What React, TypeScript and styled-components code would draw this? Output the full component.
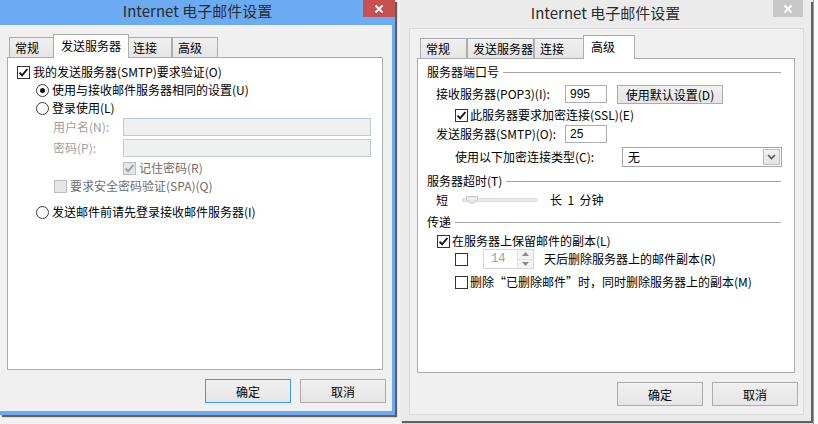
import * as React from 'react';
import styled, { createGlobalStyle } from 'styled-components';

const Global = createGlobalStyle`
  html, body { margin: 0; padding: 0; background: #f2f2f2; }
  body {
    font-family: "Noto Sans CJK SC", "Liberation Sans", sans-serif;
    font-size: 12px;
    color: #000;
  }
`;

const FONT = `"Noto Sans CJK SC", "Liberation Sans", sans-serif`;

const Desktop = styled.div`
  width: 818px;
  height: 424px;
  overflow: hidden;
  display: flex;
  align-items: flex-start;
  background: #f2f2f2;
`;

const Window = styled.div<{ $active?: boolean; $w: number; $ml?: number }>`
  flex: none;
  width: ${p => p.$w}px;
  margin-left: ${p => p.$ml ?? 0}px;
  display: flex;
  flex-direction: column;
  background: ${p => (p.$active ? '#6aabf4' : '#ebebeb')};
  box-shadow: 2px 2px 1px rgba(0, 0, 0, 0.6);
`;

const TitleBar = styled.div<{ $h: number }>`
  height: ${p => p.$h}px;
  display: grid;
  grid-template-columns: 1fr auto 1fr;
`;

const TitleText = styled.div<{ $lh: number }>`
  grid-column: 2;
  line-height: ${p => p.$lh}px;
  font-size: 15px;
  color: #2b2b2b;
  white-space: nowrap;
`;

const Close = styled.div<{ $active?: boolean; $w: number; $mr: number }>`
  grid-column: 3;
  justify-self: end;
  width: ${p => p.$w}px;
  height: 17px;
  margin-right: ${p => p.$mr}px;
  background: ${p => (p.$active ? '#c75050' : '#c7c7c7')};
  display: flex;
  align-items: center;
  justify-content: center;
`;

const Client = styled.div<{ $margin: string; $h: number; $border?: boolean }>`
  margin: ${p => p.$margin};
  height: ${p => p.$h}px;
  box-sizing: border-box;
  background: #f0f0f0;
  border: ${p => (p.$border ? '1px solid #d9d9d9' : 'none')};
  padding: ${p => (p.$border ? '6px 8px 0 7px' : '9px 9px 0 7px')};
  display: flex;
  flex-direction: column;
`;

const TabStrip = styled.div<{ $inset: number }>`
  height: 24px;
  display: flex;
  align-items: flex-end;
  padding-left: ${p => p.$inset}px;
  margin-bottom: -1px;
  position: relative;
  z-index: 1;
`;

const Tab = styled.div<{ $w: number; $on?: boolean }>`
  flex: none;
  box-sizing: border-box;
  width: ${p => p.$w + (p.$on ? 4 : 0)}px;
  height: ${p => (p.$on ? 24 : 20)}px;
  margin: ${p => (p.$on ? '0 -2px 0 -2px' : '0 0 1px 0')};
  border: 1px solid #acacac;
  border-bottom: none;
  background: ${p => (p.$on ? '#fff' : 'linear-gradient(#f0f0f0, #e5e5e5)')};
  padding: ${p => (p.$on ? '2px 0 0 7px' : '1px 0 0 5px')};
  line-height: 17px;
  white-space: nowrap;
  overflow: hidden;
  position: relative;
  z-index: ${p => (p.$on ? 2 : 0)};
`;

const Panel = styled.div<{ $h: number; $pad: string }>`
  height: ${p => p.$h}px;
  box-sizing: border-box;
  background: #fff;
  border: 1px solid #acacac;
  padding: ${p => p.$pad};
  display: flex;
  flex-direction: column;
`;

const Row = styled.div<{ $mt?: number; $indent?: number; $h?: number }>`
  flex: none;
  display: flex;
  align-items: center;
  height: ${p => p.$h ?? 18}px;
  margin-top: ${p => p.$mt ?? 0}px;
  padding-left: ${p => p.$indent ?? 0}px;
`;

const Label = styled.span<{ $tone?: 'light' | 'mid'; $w?: number; $ml?: number }>`
  flex: none;
  white-space: pre;
  width: ${p => (p.$w ? `${p.$w}px` : 'auto')};
  margin-left: ${p => p.$ml ?? 0}px;
  color: ${p => (p.$tone === 'light' ? '#a0a0a0' : p.$tone === 'mid' ? '#6d6d6d' : '#000')};
  line-height: 18px;
`;

const GroupLine = styled.div`
  flex: 1;
  margin-left: 4px;
  border-top: 1px solid #a6a6a6;
  height: 0;
`;

const Box = styled.div<{ $disabled?: boolean }>`
  flex: none;
  width: 13px;
  height: 13px;
  box-sizing: border-box;
  border: 1px solid ${p => (p.$disabled ? '#bcbcbc' : '#333')};
  background: ${p => (p.$disabled ? '#e6e6e6' : '#fff')};
  display: flex;
  align-items: center;
  justify-content: center;
`;

const Circle = styled.div`
  flex: none;
  width: 13px;
  height: 13px;
  box-sizing: border-box;
  border: 1px solid #3a3a3a;
  border-radius: 50%;
  background: #fff;
  display: flex;
  align-items: center;
  justify-content: center;
`;

const Dot = styled.div`
  width: 5px;
  height: 5px;
  border-radius: 50%;
  background: #111;
`;

const Field = styled.div<{ $w: number; $h?: number; $disabled?: boolean }>`
  flex: none;
  width: ${p => p.$w}px;
  height: ${p => p.$h ?? 18}px;
  box-sizing: border-box;
  border: 1px solid ${p => (p.$disabled ? '#bccadb' : '#abadb3')};
  background: ${p => (p.$disabled ? '#f0f0f0' : '#fff')};
  padding-left: 4px;
  line-height: 16px;
  font-family: "Liberation Sans", sans-serif;
  font-size: 12px;
`;

const Button = styled.div<{ $w: number; $h: number; $focused?: boolean; $ml?: number }>`
  flex: none;
  width: ${p => p.$w}px;
  height: ${p => p.$h}px;
  margin-left: ${p => p.$ml ?? 0}px;
  box-sizing: border-box;
  border: 1px solid ${p => (p.$focused ? '#3c9af5' : '#acacac')};
  background: linear-gradient(#f0f0f0, #e5e5e5);
  display: flex;
  align-items: center;
  justify-content: center;
  font-family: ${FONT};
  font-size: 12px;
  white-space: nowrap;
`;

const ButtonRow = styled.div<{ $mt: number }>`
  display: flex;
  justify-content: flex-end;
  gap: 9px;
  margin-top: ${p => p.$mt}px;
  margin-right: -3px;
`;

const Select = styled.div`
  flex: none;
  width: 160px;
  height: 20px;
  box-sizing: border-box;
  border: 1px solid #a5a5a5;
  background: #fff;
  display: flex;
  align-items: center;
  padding: 1px;
`;

const SelectValue = styled.span`
  flex: 1;
  padding-left: 4px;
  line-height: 16px;
`;

const SelectArrow = styled.div`
  width: 17px;
  height: 16px;
  box-sizing: border-box;
  border: 1px solid #bcbcbc;
  background: linear-gradient(#f3f3f3, #e3e3e3);
  display: flex;
  align-items: center;
  justify-content: center;
`;

const Slider = styled.div`
  flex: none;
  position: relative;
  width: 75px;
  height: 18px;
  margin-left: 14px;
  display: flex;
  align-items: center;
`;

const Track = styled.div`
  width: 100%;
  height: 4px;
  box-sizing: border-box;
  border: 1px solid #dcdcdc;
  background: #e9e9e9;
`;

const Thumb = styled.svg`
  position: absolute;
  left: 4px;
  top: 5px;
`;

const Spin = styled.div`
  flex: none;
  width: 51px;
  height: 20px;
  margin-left: 15px;
  box-sizing: border-box;
  border: 1px solid #d6d6d6;
  background: #fff;
  display: flex;
`;

const SpinText = styled.span`
  flex: 1;
  padding-left: 7px;
  line-height: 18px;
  color: #a0a0a0;
  font-family: "Liberation Mono", monospace;
  font-size: 12px;
`;

const SpinButtons = styled.div`
  width: 15px;
  display: flex;
  flex-direction: column;
  border-left: 1px solid #e2e2e2;
`;

const SpinHalf = styled.div<{ $top?: boolean }>`
  flex: 1;
  display: flex;
  align-items: center;
  justify-content: center;
  background: #f4f4f4;
  border-top: ${p => (p.$top ? 'none' : '1px solid #e2e2e2')};
`;

const Edge = styled.div`
  flex: 1;
  align-self: stretch;
  margin-left: 2px;
  background: #fbfbfb;
  border-left: 1px solid #9a9a9a;
`;

function Check({ checked, disabled }: { checked?: boolean; disabled?: boolean }) {
  return (
    <Box $disabled={disabled}>
      {checked && (
        <svg width="11" height="11" viewBox="0 0 11 11">
          <path
            d="M1.6 5.6 L4.1 8.4 L9.4 2"
            fill="none"
            stroke={disabled ? '#9c9c9c' : '#111'}
            strokeWidth="1.9"
          />
        </svg>
      )}
    </Box>
  );
}

function Radio({ on }: { on?: boolean }) {
  return <Circle>{on && <Dot />}</Circle>;
}

function XIcon() {
  return (
    <svg width="10" height="10" viewBox="0 0 10 10">
      <path d="M1.5 1.5 L8.5 8.5 M8.5 1.5 L1.5 8.5" stroke="#fff" strokeWidth="2" />
    </svg>
  );
}

function Tabs({ widths, active, inset }: { widths: number[]; active: number; inset: number }) {
  const names = ['常规', '发送服务器', '连接', '高级'];
  return (
    <TabStrip $inset={inset}>
      {names.map((n, i) => (
        <Tab key={n} $w={widths[i]} $on={i === active}>
          {n}
        </Tab>
      ))}
    </TabStrip>
  );
}

function OutgoingDialog() {
  return (
    <Window $active $w={395}>
      <TitleBar $h={25}>
        <TitleText $lh={22}>Internet 电子邮件设置</TitleText>
        <Close $active $w={32} $mr={0}>
          <XIcon />
        </Close>
      </TitleBar>
      <Client $margin="0 3px 4px 0" $h={386}>
        <Tabs widths={[46, 72, 45, 46]} active={1} inset={2} />
        <Panel $h={313} $pad="5px 0 0 9px">
          <Row>
            <Check checked />
            <Label $ml={3}>我的发送服务器(SMTP)要求验证(O)</Label>
          </Row>
          <Row $indent={19}>
            <Radio on />
            <Label $ml={3}>使用与接收邮件服务器相同的设置(U)</Label>
          </Row>
          <Row $indent={19}>
            <Radio />
            <Label $ml={3}>登录使用(L)</Label>
          </Row>
          <Row $indent={36} $mt={1}>
            <Label $tone="light" $w={70}>用户名(N):</Label>
            <Field $w={248} $disabled />
          </Row>
          <Row $indent={36} $mt={3}>
            <Label $tone="light" $w={70}>密码(P):</Label>
            <Field $w={248} $disabled />
          </Row>
          <Row $indent={106} $mt={2}>
            <Check checked disabled />
            <Label $tone="mid" $ml={3}>记住密码(R)</Label>
          </Row>
          <Row $indent={37}>
            <Check disabled />
            <Label $tone="mid" $ml={3}>要求安全密码验证(SPA)(Q)</Label>
          </Row>
          <Row $indent={19} $mt={8}>
            <Radio />
            <Label $ml={3}>发送邮件前请先登录接收邮件服务器(I)</Label>
          </Row>
        </Panel>
        <ButtonRow $mt={9}>
          <Button $w={86} $h={24} $focused>确定</Button>
          <Button $w={86} $h={24}>取消</Button>
        </ButtonRow>
      </Client>
    </Window>
  );
}

function AdvancedDialog() {
  return (
    <Window $w={411} $ml={5}>
      <TitleBar $h={28}>
        <TitleText $lh={26}>Internet 电子邮件设置</TitleText>
        <Close $w={30} $mr={8}>
          <XIcon />
        </Close>
      </TitleBar>
      <Client $margin="0 7px 6px 9px" $h={387} $border>
        <Tabs widths={[47, 67, 51, 48]} active={3} inset={3} />
        <Panel $h={315} $pad="4px 13px 0 9px">
          <Row>
            <Label>服务器端口号</Label>
            <GroupLine />
          </Row>
          <Row $indent={9} $mt={4}>
            <Label $w={129}>接收服务器(POP3)(I):</Label>
            <Field $w={42}>995</Field>
            <Button $w={106} $h={19} $ml={10}>使用默认设置(D)</Button>
          </Row>
          <Row $indent={28} $mt={3}>
            <Check checked />
            <Label $ml={2}>此服务器要求加密连接(SSL)(E)</Label>
          </Row>
          <Row $indent={9} $mt={1}>
            <Label $w={129}>发送服务器(SMTP)(O):</Label>
            <Field $w={42}>25</Field>
          </Row>
          <Row $indent={28} $mt={4} $h={20}>
            <Label $w={167}>使用以下加密连接类型(C):</Label>
            <Select>
              <SelectValue>无</SelectValue>
              <SelectArrow>
                <svg width="9" height="6" viewBox="0 0 9 6">
                  <path d="M1 1 L4.5 4.5 L8 1" fill="none" stroke="#555" strokeWidth="1.6" />
                </svg>
              </SelectArrow>
            </Select>
          </Row>
          <Row $mt={5}>
            <Label>服务器超时(T)</Label>
            <GroupLine />
          </Row>
          <Row $indent={9} $mt={1}>
            <Label>短</Label>
            <Slider>
              <Track />
              <Thumb width="12" height="8" viewBox="0 0 12 8">
                <path d="M0.5 0.5 H11.5 V4 L6 7.5 L0.5 4 Z" fill="#ececec" stroke="#c4c4c4" />
              </Thumb>
            </Slider>
            <Label $ml={13}>长  1  分钟</Label>
          </Row>
          <Row $mt={4}>
            <Label>传递</Label>
            <GroupLine />
          </Row>
          <Row $indent={10} $mt={1}>
            <Check checked />
            <Label $ml={2}>在服务器上保留邮件的副本(L)</Label>
          </Row>
          <Row $indent={28} $mt={-1} $h={20}>
            <Check />
            <Spin>
              <SpinText>14</SpinText>
              <SpinButtons>
                <SpinHalf $top>
                  <svg width="7" height="4" viewBox="0 0 7 4">
                    <path d="M0 4 L3.5 0 L7 4 Z" fill="#8a8a8a" />
                  </svg>
                </SpinHalf>
                <SpinHalf>
                  <svg width="7" height="4" viewBox="0 0 7 4">
                    <path d="M0 0 L3.5 4 L7 0 Z" fill="#8a8a8a" />
                  </svg>
                </SpinHalf>
              </SpinButtons>
            </Spin>
            <Label $ml={10}>天后删除服务器上的邮件副本(R)</Label>
          </Row>
          <Row $indent={28} $mt={4}>
            <Check />
            <Label $ml={2}>删除“已删除邮件”时，同时删除服务器上的副本(M)</Label>
          </Row>
        </Panel>
        <ButtonRow $mt={9}>
          <Button $w={86} $h={24}>确定</Button>
          <Button $w={86} $h={24}>取消</Button>
        </ButtonRow>
      </Client>
    </Window>
  );
}

export default function App() {
  return (
    <>
      <Global />
      <Desktop>
        <OutgoingDialog />
        <AdvancedDialog />
        <Edge />
      </Desktop>
    </>
  );
}
